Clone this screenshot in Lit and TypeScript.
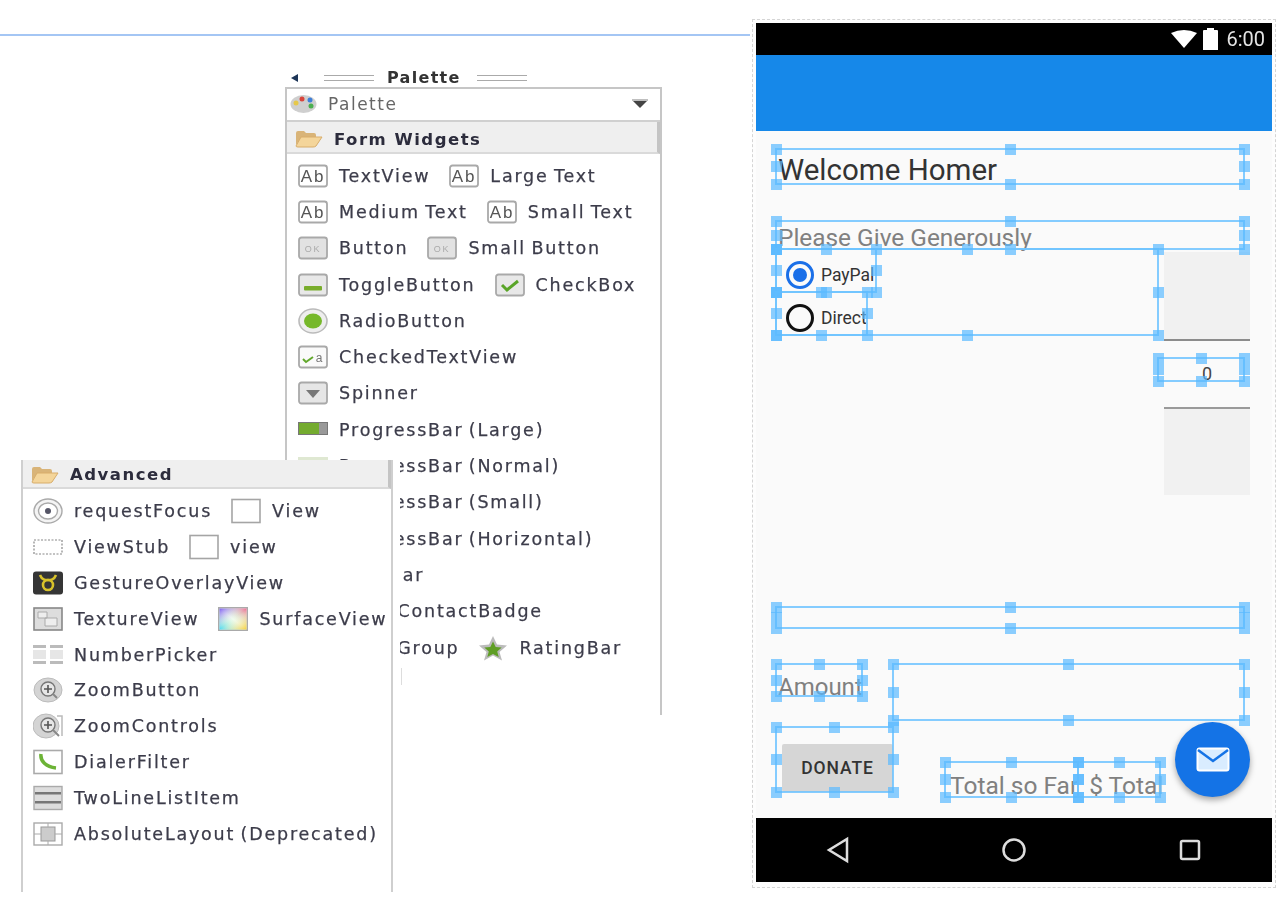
import { LitElement, html, css, svg } from "lit";
import { customElement } from "lit/decorators.js";

type Item = [string, string];
const paletteRows: Item[][] = [
  [["ab", "TextView"], ["ab", "Large Text"]],
  [["ab", "Medium Text"], ["ab", "Small Text"]],
  [["ok", "Button"], ["ok", "Small Button"]],
  [["toggle", "ToggleButton"], ["check", "CheckBox"]],
  [["radio", "RadioButton"]],
  [["ctv", "CheckedTextView"]],
  [["spinner", "Spinner"]],
  [["progress", "ProgressBar (Large)"]],
  [["progressLight", "ProgressBar (Normal)"]],
  [["progressLight", "ProgressBar (Small)"]],
  [["progressLight", "ProgressBar (Horizontal)"]],
  [["progressLight", "SeekBar"]],
  [["progressLight", "QuickContactBadge"]],
  [["progressLight", "RadioGroup"], ["star", "RatingBar"]],
];
const advancedRows: Item[][] = [
  [["focus", "requestFocus"], ["view", "View"]],
  [["stub", "ViewStub"], ["view", "view"]],
  [["gesture", "GestureOverlayView"]],
  [["texture", "TextureView"], ["surface", "SurfaceView"]],
  [["picker", "NumberPicker"]],
  [["zoom", "ZoomButton"]],
  [["zoomc", "ZoomControls"]],
  [["dialer", "DialerFilter"]],
  [["twoline", "TwoLineListItem"]],
  [["abs", "AbsoluteLayout (Deprecated)"]],
];
// selection rectangles in canvas coordinates: x1, y1, x2, y2
const selections: number[][] = [
  [776, 149, 1244, 184],
  [776, 221, 1244, 249],
  [776, 249, 1158, 335],
  [776, 249, 876, 292],
  [776, 292, 867, 335],
  [1158, 358, 1244, 381],
  [776, 607, 1244, 628],
  [776, 664, 862, 696],
  [893, 664, 1244, 720],
  [776, 727, 893, 792],
  [945, 762, 1078, 797],
  [1078, 762, 1160, 797],
];

const box = (fill = "#f7f7f7") =>
  svg`<rect x="1" y="2.500" width="28" height="21" rx="2.500" fill="${fill}" stroke="#a9a9a9" stroke-width="1.800"/>`;

function icon(name: string) {
  switch (name) {
    case "ab":
      return svg`${box("#fff")}<text x="15" y="19" text-anchor="middle" font-family="Liberation Sans" font-size="17" fill="#555">Ab</text>`;
    case "ok":
      return svg`${box("#e2e2e2")}<text x="15" y="17" text-anchor="middle" font-family="Liberation Sans" font-size="9" fill="#aaa">OK</text>`;
    case "toggle":
      return svg`${box("#e8e8e8")}<rect x="6" y="14" width="18" height="4.500" rx="1" fill="#79ad2c"/>`;
    case "check":
      return svg`${box("#e8e8e8")}<path d="M7 13l5 5 11-9" fill="none" stroke="#5aa528" stroke-width="3"/>`;
    case "radio":
      return svg`<ellipse cx="15" cy="13" rx="14" ry="12" fill="#eee" stroke="#bbb" stroke-width="1.600"/><ellipse cx="15" cy="13" rx="9" ry="7.500" fill="#76b82a"/>`;
    case "ctv":
      return svg`${box("#fafafa")}<path d="M5 15l3 3 7-5" fill="none" stroke="#62a82c" stroke-width="2"/><text x="22" y="18" text-anchor="middle" font-family="Liberation Sans" font-size="12" fill="#777">a</text>`;
    case "spinner":
      return svg`${box("#e6e6e6")}<path d="M8 10h14l-7 8z" fill="#777"/>`;
    case "progress":
      return svg`<rect x="0" y="5" width="30" height="13" fill="#777"/><rect x="1" y="6" width="20" height="11" fill="#74ab2f"/><rect x="21" y="6" width="8" height="11" fill="#999"/>`;
    case "progressLight":
      return svg`<rect x="0" y="4" width="30" height="13" fill="#dfe8d2"/>`;
    case "star":
      return svg`<path d="M15 1l4 8.500 10 1-7.500 6.500 2.500 8.500-9-5-9 5 2.500-8.500L1 10.500l10-1z" fill="#bbb"/><path d="M15 6.500l2.700 5.500 6 .5-4.500 4 1.500 5.500-5.700-3-5.700 3 1.500-5.500-4.500-4 6-.5z" fill="#5f9e25"/>`;
    case "focus":
      return svg`<ellipse cx="15" cy="13" rx="14" ry="12" fill="#f4f4f4" stroke="#aaa" stroke-width="1.400"/><ellipse cx="15" cy="13" rx="9.500" ry="8" fill="#fff" stroke="#aaa" stroke-width="1.400"/><circle cx="15" cy="13" r="3" fill="#556"/>`;
    case "view":
      return svg`<rect x="1" y="1.500" width="28" height="23" fill="#fff" stroke="#a5a5a5" stroke-width="1.600"/>`;
    case "stub":
      return svg`<rect x="1" y="6" width="28" height="14" fill="#fff" stroke="#888" stroke-width="1.200" stroke-dasharray="2 1.500"/>`;
    case "gesture":
      return svg`<rect x="0" y="1.500" width="30" height="23" rx="3" fill="#353535"/><circle cx="15" cy="15" r="5" fill="none" stroke="#d8c22a" stroke-width="2.600"/><path d="M7 5c2 5 5 5 8 5s6 0 8-5" fill="none" stroke="#d8c22a" stroke-width="2.600"/>`;
    case "texture":
      return svg`<rect x="1" y="2" width="28" height="22" fill="#ddd" stroke="#888" stroke-width="1.600"/><path d="M5 6h9v6H5zM12 12h12v8H12z" fill="#eee" stroke="#aaa"/>`;
    case "surface":
      return svg`<defs><linearGradient id="sa" x1="0" y1="0" x2="1" y2="1"><stop offset="0" stop-color="#7d5cf0"/><stop offset=".5" stop-color="#fff" stop-opacity=".2"/><stop offset="1" stop-color="#f7d03a"/></linearGradient><linearGradient id="sb" x1="0" y1="1" x2="1" y2="0"><stop offset="0" stop-color="#1fd0f2"/><stop offset=".5" stop-color="#9fe89a" stop-opacity=".2"/><stop offset="1" stop-color="#f0467a"/></linearGradient></defs><rect x="0" y="1" width="30" height="24" fill="#aaa"/><rect x="1.500" y="2.500" width="27" height="21" fill="#fff"/><rect x="1.500" y="2.500" width="27" height="21" fill="url(#sb)"/><rect x="1.500" y="2.500" width="27" height="21" fill="url(#sa)"/>`;
    case "picker":
      return svg`<rect x="0" y="3" width="13" height="3" fill="#bbb"/><rect x="17" y="3" width="13" height="3" fill="#bbb"/><rect x="0" y="8" width="13" height="9" fill="#e6e6e6"/><rect x="17" y="8" width="13" height="9" fill="#e6e6e6"/><rect x="0" y="19" width="13" height="3" fill="#bbb"/><rect x="17" y="19" width="13" height="3" fill="#bbb"/>`;
    case "zoom":
      return svg`<ellipse cx="15" cy="13" rx="14" ry="12" fill="#d4d4d4" stroke="#bbb"/><circle cx="15" cy="12" r="7" fill="#e6e6e6" stroke="#777" stroke-width="1.400"/><path d="M15 8v8M11 12h8" stroke="#555" stroke-width="1.600"/><path d="M20 17l4 4" stroke="#888" stroke-width="2"/>`;
    case "zoomc":
      return svg`<ellipse cx="13" cy="13" rx="13" ry="12" fill="#d4d4d4" stroke="#bbb"/><path d="M24 3h5v20" fill="none" stroke="#bbb" stroke-width="1.500"/><circle cx="15" cy="12" r="7" fill="#e6e6e6" stroke="#777" stroke-width="1.400"/><path d="M15 8v8M11 12h8" stroke="#555" stroke-width="1.600"/><path d="M20 17l6 6" stroke="#888" stroke-width="2"/>`;
    case "dialer":
      return svg`<rect x="1" y="1.500" width="28" height="23" fill="#fff" stroke="#aaa" stroke-width="1.600"/><path d="M8 5c-1 7 5 13 15 14" fill="none" stroke="#6cb336" stroke-width="3.500"/>`;
    case "twoline":
      return svg`<rect x="1" y="1.500" width="28" height="23" fill="#ddd" stroke="#aaa" stroke-width="1.400"/><rect x="2" y="7" width="26" height="2.500" fill="#777"/><rect x="2" y="16" width="26" height="2.500" fill="#777"/>`;
    case "abs":
      return svg`<rect x="1" y="2" width="28" height="22" fill="#fff" stroke="#aaa" stroke-width="1.400"/><rect x="8" y="6" width="14" height="14" fill="#ccc" stroke="#999"/><path d="M1 13h7M22 13h7M15 2v4M15 20v4" stroke="#aaa"/>`;
    default:
      return svg``;
  }
}

@customElement("app-root")
export class AppRoot extends LitElement {
  static styles = css`
    :host { display: block; position: relative; width: 1284px; height: 902px; overflow: hidden; background: #fff; font-family: "DejaVu Sans", sans-serif; }
    .stage { position: absolute; inset: 0; filter: blur(0.7px); }
    .rule { height: 2px; width: 750px; margin-top: 34px; background: #a4c6f4; }

    .palette { position: absolute; left: 285px; top: 68px; width: 377px; height: 647px; display: flex; flex-direction: column; }
    .titlebar { height: 19px; flex: none; display: flex; align-items: center; padding-left: 6px; font-weight: 700; font-size: 16px; letter-spacing: 1.300px; color: #333; }
    .arrow { width: 0; height: 0; border: 4px solid transparent; border-left: 0; border-right: 7px solid #1d3558; margin-right: 26px; }
    .grip { width: 50px; height: 4px; border-top: 1px solid #aaa; border-bottom: 1px solid #aaa; }
    .titlebar span { margin: 0 16px 0 13px; }
    .pbox { flex: 1; border: solid #c6c6c6; border-width: 2px 2px 0; min-height: 0; display: flex; flex-direction: column; }
    .combo { height: 33px; flex: none; display: flex; align-items: center; padding: 0 0 2px 3px; box-sizing: border-box; border-bottom: 2px solid #d0d0d0; color: #666; font-size: 17px; letter-spacing: 1.500px; }
    .combo svg { margin-right: 11px; }
    .combo .drop { margin-left: auto; margin-right: 11px; }
    .head { flex: none; display: flex; align-items: center; background: #efefef; border-bottom: 2px solid #dadada; border-right: 3px solid #c4c4c4; font-weight: 700; font-size: 16.500px; letter-spacing: 1.500px; color: #2c2c3c; }
    .palette .head { height: 32px; padding: 4px 0 0 8px; box-sizing: border-box; }
    .head svg { margin-right: 11px; }
    .list { display: flex; flex-direction: column; }
    .palette .list { padding: 3.500px 0 0 11px; }
    .row { display: flex; align-items: center; gap: 19px; height: 36.300px; flex: none; white-space: nowrap; }
    .item { display: flex; align-items: center; gap: 11px; font-size: 17.500px; letter-spacing: 1.800px; word-spacing: -2px; color: #3c3c4a; -webkit-text-stroke: 0.25px #3c3c4a; }
    .item svg { flex: none; }
    .scrap { position: absolute; left: 116px; top: 600px; width: 1px; height: 17px; background: #ddd; }

    .advanced { position: absolute; left: 21px; top: 460px; width: 379px; height: 432px; background: #fff; }
    .abox { width: 372px; height: 100%; box-sizing: border-box; border: solid #cfcfcf; border-width: 0 2px; }
    .advanced .head { height: 29px; padding: 2px 0 0 8px; box-sizing: border-box; }
    .advanced .list { padding: 4.500px 0 0 10px; }
    .advanced .row { height: 35.800px; }

    .frame { position: absolute; left: 752px; top: 19px; width: 524px; height: 869px; box-sizing: border-box; border: 1px dashed #d5d5d5; padding: 3px; background: #fdfdfd; }
    .phone { width: 516px; height: 859px; display: flex; flex-direction: column; font-family: Roboto, sans-serif; }
    .status { height: 32px; flex: none; background: #000; color: #e4e4e4; display: flex; align-items: center; justify-content: flex-end; padding-right: 7px; font-size: 20px; gap: 6px; }
    .status .time { margin-left: 2px; }
    .appbar { height: 76px; flex: none; background: #1688e9; }
    .content { flex: 1; background: #fafafa; padding: 0 22px; position: relative; min-height: 0; }
    .welcome { margin-top: 21px; font-size: 29.500px; line-height: 36px; color: #333; }
    .give { margin-top: 36px; font-size: 24.400px; line-height: 28px; color: #808080; }
    .middle { display: flex; justify-content: space-between; height: 243px; }
    .radios { padding: 1px 0 0 8px; }
    .radio { height: 43px; display: flex; align-items: center; gap: 7px; font-size: 17.500px; color: #333; }
    .dot { width: 28px; height: 28px; box-sizing: border-box; border-radius: 50%; border: 3px solid #111; }
    .dot.on { border-color: #1a6fe8; display: flex; align-items: center; justify-content: center; }
    .dot.on::after { content: ""; width: 14px; height: 14px; border-radius: 50%; background: #1a6fe8; }
    .side { width: 86px; display: flex; flex-direction: column; }
    .shade { background: #f1f1f1; flex: 1; }
    .shade.up { border-bottom: 2px solid #8c8c8c; }
    .shade.down { border-top: 2px solid #9a9a9a; }
    .num { height: 66px; display: flex; align-items: center; justify-content: center; font-size: 18px; color: #444; }
    .amount { margin-top: 178px; font-size: 24px; line-height: 28px; color: #808080; }
    .bottom { display: flex; margin: 43px 0 0 4px; }
    .donate { width: 111px; height: 48px; flex: none; background: #d6d6d6; border-radius: 2px; color: #333; font-weight: 500; font-size: 17.500px; letter-spacing: .9px; display: flex; align-items: center; justify-content: center; }
    .total { display: flex; gap: 11px; margin: 28px 0 0 57px; font-size: 24.500px; line-height: 28px; color: #808080; white-space: nowrap; }
    .fab { position: absolute; right: 22px; top: 591px; width: 75px; height: 75px; border-radius: 50%; background: #1473e6; box-shadow: 0 3px 6px rgba(0,0,0,.35); display: flex; align-items: center; justify-content: center; }
    .nav { height: 64px; flex: none; background: #000; display: flex; align-items: center; justify-content: center; gap: 150px; }
    .nav svg { display: block; }

    .overlay { position: absolute; left: 0; top: 0; }
    .sel { position: absolute; box-sizing: border-box; border: 2px solid rgba(110,195,255,.85); }
    .hd { position: absolute; width: 11px; height: 11px; background: rgba(90,185,255,.7); }
  `;

  private item(it: Item) {
    return html`<div class="item"><svg width="30" height="26" viewBox="0 0 30 26">${icon(it[0])}</svg>${it[1]}</div>`;
  }
  private rows(rows: Item[][]) {
    return rows.map((r) => html`<div class="row">${r.map((i) => this.item(i))}</div>`);
  }
  private folder() {
    return html`<svg width="28" height="18" viewBox="0 0 28 18"><path d="M1 15V3q0-2 2-2h6l2 2h8q2 0 2 2v2H7z" fill="#d9b478"/><path d="M1 16 6 7h21l-6 9q-1 1-3 1H3q-2 0-2-1z" fill="#f4d59a" stroke="#d8ad6a"/></svg>`;
  }

  render() {
    return html`
      <div class="stage">
        <div class="rule"></div>

        <div class="palette">
          <div class="titlebar"><i class="arrow"></i><i class="grip"></i><span>Palette</span><i class="grip"></i></div>
          <div class="pbox">
            <div class="combo">
              <svg width="27" height="20" viewBox="0 0 27 20"><ellipse cx="13.500" cy="10" rx="13" ry="9" fill="#cfcfcf"/><circle cx="6" cy="9" r="2.500" fill="#e6c84a"/><circle cx="12" cy="5" r="2.500" fill="#d9453c"/><circle cx="20" cy="6" r="2.500" fill="#3f7fd8"/><circle cx="21" cy="12" r="2.500" fill="#4caf50"/></svg>
              Palette
              <svg class="drop" width="18" height="10" viewBox="0 0 18 10"><path d="M1 1h16" stroke="#aaa" stroke-width="1.500"/><path d="M2 2h14L9 9z" fill="#444"/></svg>
            </div>
            <div class="head">${this.folder()}Form Widgets</div>
            <div class="list">${this.rows(paletteRows)}</div>
          </div>
          <i class="scrap"></i>
        </div>

        <div class="advanced">
          <div class="abox">
            <div class="head">${this.folder()}Advanced</div>
            <div class="list">${this.rows(advancedRows)}</div>
          </div>
        </div>

        <div class="frame">
          <div class="phone">
            <div class="status">
              <svg width="26" height="18" viewBox="0 0 26 18"><path d="M0 3Q13-3 26 3L13 18z" fill="#fff"/></svg>
              <svg width="15" height="22" viewBox="0 0 15 22"><path d="M4 2V0h7v2h3q1 0 1 1v19H0V3q0-1 1-1z" fill="#fff"/></svg>
              <span class="time">6:00</span>
            </div>
            <div class="appbar"></div>
            <div class="content">
              <div class="welcome">Welcome Homer</div>
              <div class="give">Please Give Generously</div>
              <div class="middle">
                <div class="radios">
                  <div class="radio"><i class="dot on"></i>PayPal</div>
                  <div class="radio"><i class="dot"></i>Direct</div>
                </div>
                <div class="side">
                  <div class="shade up"></div>
                  <div class="num">0</div>
                  <div class="shade down"></div>
                </div>
              </div>
              <div class="amount">Amount</div>
              <div class="bottom">
                <div class="donate">DONATE</div>
                <div class="total"><span>Total so Far</span><span>$ Total</span></div>
              </div>
              <div class="fab">
                <svg width="34" height="25" viewBox="0 0 34 25"><rect x="1.500" y="1.500" width="31" height="22" rx="2" fill="#d9ecff" stroke="#fff" stroke-width="2"/><path d="M2 3l15 11L32 3" fill="none" stroke="#1473e6" stroke-width="2.500"/></svg>
              </div>
            </div>
            <div class="nav">
              <svg width="26" height="28" viewBox="0 0 26 28"><path d="M22 3v22L4 14z" fill="none" stroke="#ddd" stroke-width="2.500"/></svg>
              <svg width="26" height="28" viewBox="0 0 26 28"><circle cx="13" cy="14" r="10.500" fill="none" stroke="#ddd" stroke-width="2.500"/></svg>
              <svg width="26" height="28" viewBox="0 0 26 28"><rect x="4" y="5" width="18" height="18" rx="1.500" fill="none" stroke="#ddd" stroke-width="2.500"/></svg>
            </div>
          </div>
        </div>

        <div class="overlay">${selections.map((s) => this.selection(s))}</div>
      </div>
    `;
  }

  private selection([x1, y1, x2, y2]: number[]) {
    const mx = (x1 + x2) / 2;
    const my = (y1 + y2) / 2;
    const pts = [[x1, y1], [mx, y1], [x2, y1], [x1, my], [x2, my], [x1, y2], [mx, y2], [x2, y2]];
    return html`
      <div class="sel" style="left:${x1 - 1}px;top:${y1 - 1}px;width:${x2 - x1 + 2}px;height:${y2 - y1 + 2}px"></div>
      ${pts.map((p) => html`<div class="hd" style="left:${p[0] - 5.5}px;top:${p[1] - 5.5}px"></div>`)}
    `;
  }
}
